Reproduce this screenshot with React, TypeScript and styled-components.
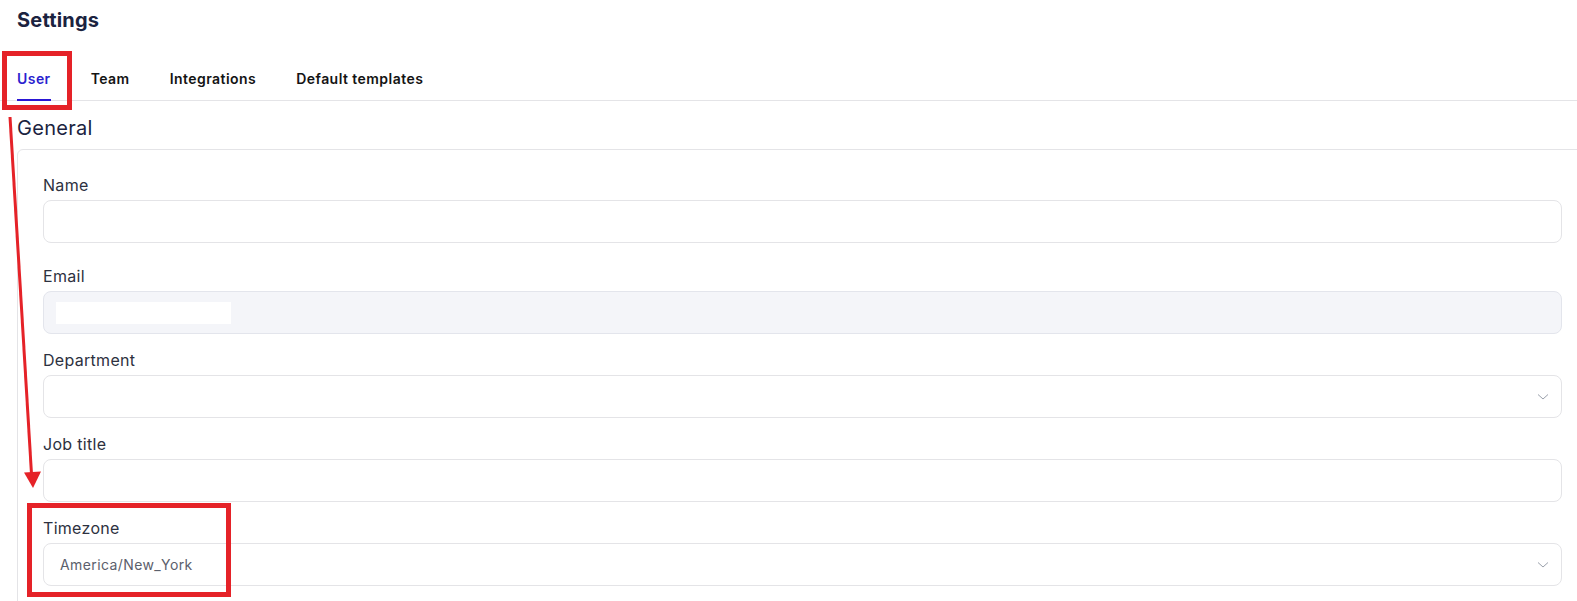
import React from "react";
import styled, { createGlobalStyle } from "styled-components";

const GlobalStyle = createGlobalStyle`
  html, body {
    margin: 0;
    padding: 0;
    overflow: hidden;
    background: #ffffff;
  }
  body {
    font-family: Inter, "Liberation Sans", sans-serif;
    color: #2d3140;
  }
  * { box-sizing: border-box; }
`;

const Page = styled.div`
  position: relative;
  width: 1577px;
  height: 601px;
  overflow: hidden;
  background: #ffffff;
`;

const Header = styled.header`
  padding: 8px 17px 0;
  height: 56px;
`;

const Title = styled.h1`
  margin: 0;
  font-size: 20px;
  line-height: 24px;
  font-weight: 700;
  letter-spacing: 0.2px;
  color: #1b2340;
`;

const TabBar = styled.nav`
  display: flex;
  gap: 40px;
  padding: 0 17px;
  border-bottom: 1px solid #e4e4e7;
`;

const Tab = styled.button<{ $active?: boolean }>`
  position: relative;
  background: none;
  border: none;
  padding: 13px 0 10px;
  margin: 0 0 -1px;
  font-family: inherit;
  font-size: 14px;
  line-height: 20px;
  font-weight: 600;
  letter-spacing: 0.45px;
  color: ${(p) => (p.$active ? "#2b1fcf" : "#141414")};
  border-bottom: 2px solid ${(p) => (p.$active ? "#2a16d4" : "transparent")};
  cursor: pointer;
`;

const Content = styled.main`
  padding: 0 0 0 17px;
`;

const SectionTitle = styled.h2`
  margin: 13px 0 7px;
  font-size: 20px;
  line-height: 28px;
  font-weight: 400;
  letter-spacing: 0.3px;
  color: #1b2340;
`;

const Card = styled.section`
  width: 1571px;
  border: 1px solid #e4e4e7;
  border-radius: 6px 6px 0 0;
  background: #ffffff;
  padding: 25px 25px 24px 25px;
  display: flex;
  flex-direction: column;
  gap: 16px;
`;

const Field = styled.div<{ $extra?: number }>`
  display: flex;
  flex-direction: column;
  gap: 5px;
  margin-bottom: ${(p) => p.$extra ?? 0}px;
`;

const Label = styled.label`
  font-size: 16px;
  line-height: 20px;
  font-weight: 400;
  letter-spacing: 0.3px;
  color: #2d3140;
`;

const InputBox = styled.div<{ $disabled?: boolean }>`
  height: 43px;
  border: 1px solid ${(p) => (p.$disabled ? "#e3e5ec" : "#e4e4e7")};
  border-radius: 8px;
  background: ${(p) => (p.$disabled ? "#f4f5f9" : "#ffffff")};
  display: flex;
  align-items: center;
  padding: 0 16px 0 12px;
`;

const SelectBox = styled(InputBox)`
  justify-content: space-between;
  padding: 0 12px 0 16px;
`;

const Value = styled.span`
  font-size: 14px;
  letter-spacing: 0.4px;
  color: #5b606c;
`;

const Redacted = styled.span`
  display: block;
  width: 175px;
  height: 22px;
  background: #ffffff;
`;

const Overlay = styled.svg`
  position: absolute;
  left: 0;
  top: 0;
  pointer-events: none;
`;

const Chevron = () => (
  <svg width="12" height="8" viewBox="0 0 12 8" fill="none">
    <polyline points="1,1.5 6,6 11,1.5" stroke="#9aa0ab" strokeWidth="1" fill="none" />
  </svg>
);

export default function App() {
  return (
    <Page>
      <GlobalStyle />
      <Header>
        <Title>Settings</Title>
      </Header>
      <TabBar>
        <Tab $active>User</Tab>
        <Tab>Team</Tab>
        <Tab>Integrations</Tab>
        <Tab>Default templates</Tab>
      </TabBar>
      <Content>
        <SectionTitle>General</SectionTitle>
        <Card>
          <Field $extra={7}>
            <Label>Name</Label>
            <InputBox />
          </Field>
          <Field>
            <Label>Email</Label>
            <InputBox $disabled>
              <Redacted />
            </InputBox>
          </Field>
          <Field>
            <Label>Department</Label>
            <SelectBox>
              <span />
              <Chevron />
            </SelectBox>
          </Field>
          <Field>
            <Label>Job title</Label>
            <InputBox />
          </Field>
          <Field>
            <Label>Timezone</Label>
            <SelectBox>
              <Value>America/New_York</Value>
              <Chevron />
            </SelectBox>
          </Field>
        </Card>
      </Content>
      <Overlay width="1577" height="601" viewBox="0 0 1577 601">
        <rect x="4.5" y="53.5" width="65" height="54" fill="none" stroke="#e52228" strokeWidth="5" />
        <rect x="29.5" y="505.5" width="199" height="89" fill="none" stroke="#e52228" strokeWidth="5" />
        <line x1="10" y1="117" x2="31.5" y2="474" stroke="#e52228" strokeWidth="3" />
        <polygon points="24,472.5 41,471.5 33,488" fill="#e52228" />
      </Overlay>
    </Page>
  );
}
